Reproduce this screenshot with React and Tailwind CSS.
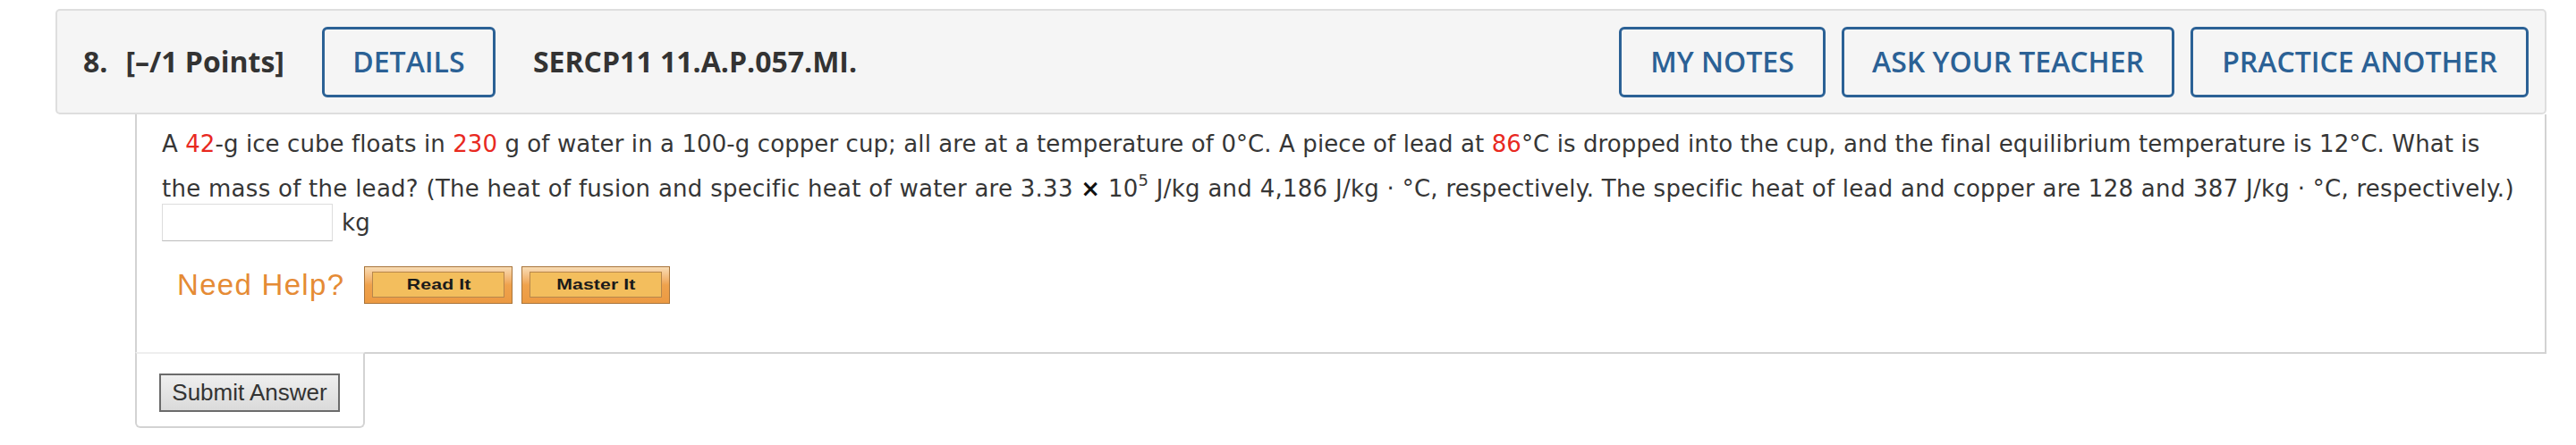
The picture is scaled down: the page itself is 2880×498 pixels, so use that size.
const headerBtn =
  "h-[79px] flex items-center justify-center border-[3px] border-[#2b6195] rounded-[6px] text-[#2b6195] text-[32px] font-semibold whitespace-nowrap";

const HelpButton = ({ label }) => (
  <div className="w-[166px] h-[42px] border border-[#a8743a] bg-gradient-to-b from-[#f8dcb4] via-[#efa24c] to-[#ec9a42] px-[8px] pt-[5px] pb-[6px]">
    <div className="h-full border border-[#b7874c] bg-[#f3be5d] flex items-center justify-center">
      <span className="inline-block scale-x-125 text-[17px] font-bold text-[#1a1a1a] font-['Liberation_Sans',Arial,sans-serif]">
        {label}
      </span>
    </div>
  </div>
);

export default function App() {
  return (
    <div className="w-[2880px] h-[498px] bg-white pl-[62px] pr-[33px] pt-[10px] font-['Open_Sans',sans-serif]">
      {/* question header */}
      <div className="h-[118px] bg-[#f5f5f5] border-2 border-[#dedede] rounded-[5px] pl-[29px] pr-[18px] flex items-center text-[#333]">
        <span className="text-[32px] font-bold">8.</span>
        <span className="ml-[20px] text-[32px] font-bold">[–/1 Points]</span>
        <button className={headerBtn + " ml-[42px] w-[194px]"}>DETAILS</button>
        <span className="ml-[42px] text-[32px] font-bold">SERCP11 11.A.P.057.MI.</span>
        <div className="ml-auto flex gap-[18px]">
          <button className={headerBtn + " w-[231px]"}>MY NOTES</button>
          <button className={headerBtn + " w-[372px]"}>ASK YOUR TEACHER</button>
          <button className={headerBtn + " w-[378px]"}>PRACTICE ANOTHER</button>
        </div>
      </div>

      {/* question body */}
      <div className="ml-[89px] border-x-2 border-b-2 border-[#d3d3d3] pl-[28px] pt-[13px] pb-[50px] text-[26px] tracking-[0.09px] text-[#363636] font-['DejaVu_Sans',Verdana,sans-serif]">
        <div className="leading-[40px] whitespace-nowrap">
          A <span className="text-[#e8291f]">42</span>-g ice cube floats in <span className="text-[#e8291f]">230</span> g of water in a 100-g copper cup; all are at a temperature of 0°C. A piece of lead at <span className="text-[#e8291f]">86</span>°C is dropped into the cup, and the final equilibrium temperature is 12°C. What is
        </div>
        <div className="mt-[13px] leading-[34px] tracking-[0.27px] whitespace-nowrap">
          the mass of the lead? (The heat of fusion and specific heat of water are 3.33 <b className="text-[#111]">×</b> 10<sup className="text-[18px] leading-none -top-[12px]">5</sup> J/kg and 4,186 J/kg · °C, respectively. The specific heat of lead and copper are 128 and 387 J/kg · °C, respectively.)
        </div>
        <div className="flex items-center gap-[10px]">
          <input className="w-[191px] h-[42px] border border-[#ddd] border-b-[#bbb] bg-white" />
          <span className="leading-[30px]">kg</span>
        </div>
        <div className="mt-[24px] ml-[17px] flex items-center">
          <span className="text-[33px] tracking-[1.3px] text-[#e58b35] font-['Liberation_Sans',Arial,sans-serif] mr-[22px]">Need Help?</span>
          <div className="flex gap-[10px]">
            <HelpButton label="Read It" />
            <HelpButton label="Master It" />
          </div>
        </div>
      </div>

      {/* submit tab */}
      <div className="ml-[89px] w-[257px] h-[85px] -mt-[2px] border-2 border-[#d3d3d3] border-t-[#eeeeee] rounded-b-[6px] pl-[25px] pt-[22px]">
        <button className="w-[202px] h-[43px] border-2 border-[#6b6b6b] bg-gradient-to-b from-[#efefef] to-[#dadada] text-[26px] leading-none text-[#333] font-['Liberation_Sans',Arial,sans-serif]">
          Submit Answer
        </button>
      </div>
    </div>
  );
}
